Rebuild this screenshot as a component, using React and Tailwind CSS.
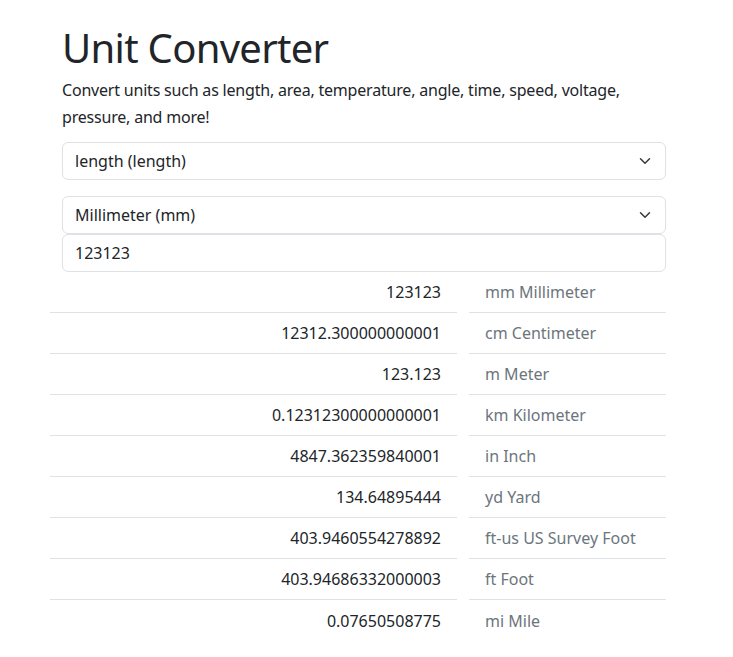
import React from "react";

const rows = [
  ["123123", "mm Millimeter"],
  ["12312.300000000001", "cm Centimeter"],
  ["123.123", "m Meter"],
  ["0.12312300000000001", "km Kilometer"],
  ["4847.362359840001", "in Inch"],
  ["134.64895444", "yd Yard"],
  ["403.9460554278892", "ft-us US Survey Foot"],
  ["403.94686332000003", "ft Foot"],
  ["0.07650508775", "mi Mile"],
];

function Chevron() {
  return (
    <svg width="12" height="12" viewBox="0 0 16 16" className="shrink-0">
      <path d="M2 5l6 6 6-6" fill="none" stroke="#343a40" strokeWidth="2" strokeLinecap="round" strokeLinejoin="round" />
    </svg>
  );
}

function Select({ label, className = "" }) {
  return (
    <div className={"flex h-[38px] items-center justify-between rounded-[6px] border border-[#dee2e6] bg-white pl-3 pr-[14px] text-[16px] text-[#212529] " + className}>
      <span>{label}</span>
      <Chevron />
    </div>
  );
}

export default function App() {
  return (
    <div className="min-h-[657px] bg-white text-[#212529]" style={{ fontFamily: '"Noto Sans", "Noto Sans CJK KR", sans-serif' }}>
      <div className="ml-[50px] w-[616px]">
        <div className="pl-3 pt-[24px]">
          <h1 className="text-[40px] font-normal leading-[1.2] tracking-[-0.7px] text-[#212529]">Unit Converter</h1>
          <p className="mt-[5px] text-[16px] leading-[27px] tracking-[-0.2px]">
            Convert units such as length, area, temperature, angle, time, speed, voltage, pressure, and more!
          </p>
          <Select label="length (length)" className="mt-[11px]" />
          <Select label="Millimeter (mm)" className="mt-[16px]" />
          <div className="flex h-[38px] items-center rounded-[6px] border border-[#dee2e6] px-3 text-[16px]">123123</div>
        </div>
        <div className="flex flex-col">
          {rows.map(([v, u], i) => (
            <div key={i} className="flex gap-3">
              <div className={"flex h-[41px] w-[407px] items-center justify-end pr-4 text-[16px] text-[#212529] " + (i < rows.length - 1 ? "border-b border-[#dee2e6]" : "")}>{v}</div>
              <div className={"flex h-[41px] w-[197px] items-center pl-4 text-[16px] text-[#6c757d] " + (i < rows.length - 1 ? "border-b border-[#dee2e6]" : "")}>{u}</div>
            </div>
          ))}
        </div>
      </div>
    </div>
  );
}
